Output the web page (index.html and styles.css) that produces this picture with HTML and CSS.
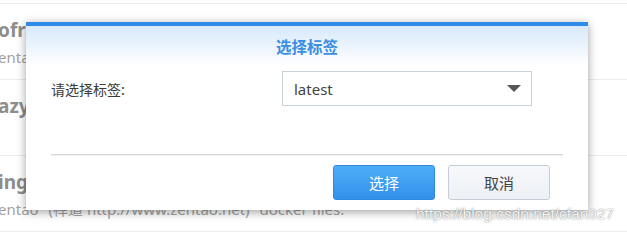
FILE: index.html
```html
<!DOCTYPE html>
<html lang="zh-CN">
<head>
<meta charset="UTF-8" />
<title>选择标签</title>
<link rel="stylesheet" href="styles.css">
</head>
<body>
  <ul class="repo-list">
    <li class="repo">
      <div class="repo-name">ofrank/zentao</div>
      <div class="repo-desc">entao docker image</div>
    </li>
    <li class="repo">
      <div class="repo-name">azyboy/zentao</div>
    </li>
    <li class="repo">
      <div class="repo-name">ing/zentao</div>
      <div class="repo-desc">entao"&nbsp;(禅道 http://www.zentao.net)"&nbsp;docker files.</div>
    </li>
    <li class="repo repo-end"></li>
  </ul>

  <div class="dialog" role="dialog" aria-labelledby="dlgTitle">
    <div class="dialog-header" id="dlgTitle">选择标签</div>

    <div class="dialog-form">
      <label for="tagSelect" class="form-label">请选择标签:</label>
      <div class="select" id="tagSelect" tabindex="0">
        <span class="select-value">latest</span>
        <svg class="select-arrow" width="14" height="7" viewBox="0 0 14 7"><path d="M0 0h14L7 7z" fill="#53565b"/></svg>
      </div>
    </div>

    <div class="dialog-sep"></div>

    <div class="dialog-footer">
      <button type="button" class="btn btn-primary">选择</button>
      <button type="button" class="btn">取消</button>
    </div>
  </div>

  <div class="watermark">https://blog.csdn.net/cfan927</div>
</body>
</html>
```

FILE: styles.css
```css
* {
  box-sizing: border-box;
}
html, body {
  height: 233px;
}
body {
  margin: 0;
  background: #fff;
  font-family: "Noto Sans", "Noto Sans CJK SC", sans-serif;
  color: #333;
  overflow: hidden;
}

/* background list behind the modal */
.repo-list {
  list-style: none;
  margin: 0 0 0 -2px;
  padding: 3px 0 0;
}
.repo {
  height: 76px;
  border-top: 1px solid #ececec;
  padding-top: 14px;
  white-space: nowrap;
}
.repo-end {
  height: 1px;
  padding: 0;
}
.repo-name {
  font-size: 19px;
  line-height: 24px;
  font-weight: 700;
  color: #8d8d8d;
}
.repo-desc {
  margin-top: 4px;
  font-size: 15px;
  line-height: 22px;
  color: #a2a2a2;
}

/* modal */
.dialog {
  position: absolute;
  left: 26px;
  top: 22px;
  width: 562px;
  height: 188px;
  background: #fff;
  border-top: 4px solid #2f8be6;
  box-shadow: 0 2px 9px rgba(0,0,0,0.38);
  font-family: "Noto Sans CJK SC", "Noto Sans", sans-serif;
}
.dialog-header {
  height: 40px;
  line-height: 40px;
  text-align: center;
  font-size: 15.5px;
  font-weight: 700;
  color: #3a8ee4;
  background: linear-gradient(#d7e9fb, #fff);
}
.dialog-form {
  display: grid;
  grid-template-columns: 231px 250px;
  align-items: center;
  padding: 5px 25px 0;
}
.form-label {
  font-size: 14px;
  color: #3b3b3b;
}
.select {
  height: 35px;
  border: 1px solid #c9d1da;
  display: flex;
  align-items: center;
  justify-content: space-between;
  padding: 0 10px 0 11px;
}
.select-value {
  font-family: "Noto Sans", sans-serif;
  font-size: 15px;
  color: #444;
}
.dialog-sep {
  margin: 48px 25px 0;
  height: 2px;
  border-top: 1px solid #d8d8d8;
  background: #efefef;
}
.dialog-footer {
  display: flex;
  justify-content: flex-end;
  gap: 13px;
  padding: 9px 38px 0 0;
}
.btn {
  width: 102px;
  height: 35px;
  border: 1px solid #c6cdd8;
  border-radius: 3px;
  background: linear-gradient(#f6f8fb, #edf0f5);
  font-family: "Noto Sans CJK SC", sans-serif;
  font-size: 15px;
  color: #444;
  cursor: pointer;
}
.btn-primary {
  border-color: #3088de;
  background: linear-gradient(#4eadf9, #3391ea);
  color: #fff;
}

.watermark {
  position: absolute;
  left: 416px;
  top: 205px;
  font-family: "Liberation Sans", Arial, sans-serif;
  font-size: 15.5px;
  color: rgba(255,255,255,0.92);
  text-shadow: 0 0 1.5px rgba(0,0,0,0.55);
  white-space: nowrap;
}
```
